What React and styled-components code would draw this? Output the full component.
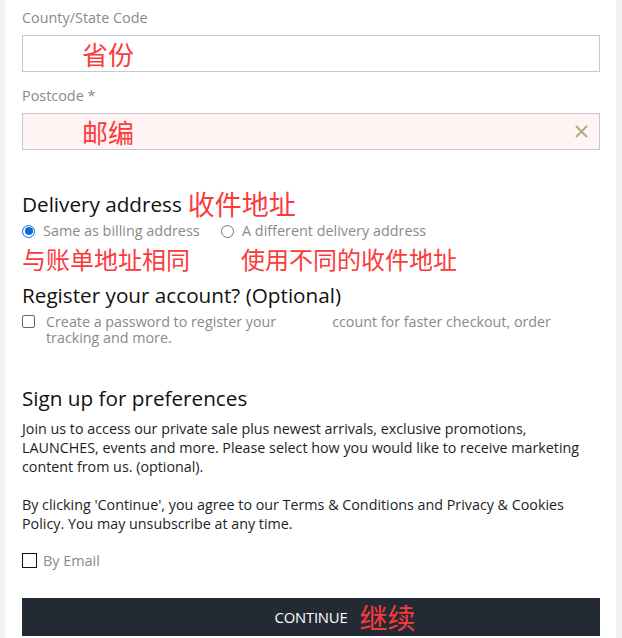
import React from 'react';
import styled, { createGlobalStyle } from 'styled-components';

const Global = createGlobalStyle`
  html, body { margin: 0; padding: 0; background: #f1f2f2; }
  body { font-family: "Open Sans", "Noto Sans CJK SC", sans-serif; }
  #root { width: 622px; }
`;

const Panel = styled.div`
  margin-left: 5px;
  width: 611px;
  height: 638px;
  overflow: hidden;
  background: #fff;
  box-sizing: border-box;
  padding: 9px 16px 0 17px;
  display: flex;
  flex-direction: column;
`;

const Label = styled.div`
  font-size: 14.4px;
  line-height: 18px;
  color: #8a8a8a;
  margin-top: ${p => p.$mt || 0}px;
  margin-bottom: 8px;
`;

const InputBox = styled.div`
  flex: none;
  height: 37px;
  box-sizing: border-box;
  border: 1px solid #c8c8c8;
  background: ${p => (p.$error ? '#fff3f3' : '#fff')};
  display: flex;
  align-items: center;
  padding: 0 11px 0 59px;
`;

const Note = styled.span`
  font-family: "Noto Sans CJK SC", sans-serif;
  color: #fb3a3c;
  font-size: ${p => p.$size || 24}px;
  line-height: 30px;
  padding-left: ${p => p.$pl || 0}px;
  white-space: nowrap;
`;

const Clear = styled.svg`
  margin-left: auto;
  width: 13px;
  height: 13px;
`;

const HeadRow = styled.div`
  flex: none;
  display: flex;
  align-items: center;
  gap: 6px;
  height: 30px;
  margin-top: ${p => p.$mt || 0}px;
`;

const Heading = styled.h3`
  margin: 0;
  font-weight: 400;
  font-size: 20.7px;
  line-height: 26px;
  color: #111;
`;

const OptionGrid = styled.div`
  display: grid;
  grid-template-columns: 199px auto;
  align-items: center;
  margin-top: ${p => p.$mt || 0}px;
`;

const Option = styled.label`
  display: flex;
  align-items: center;
  gap: 8px;
  font-size: 14.4px;
  line-height: 18px;
  color: #8a8a8a;
  white-space: nowrap;
`;

const Radio = styled.span`
  flex: none;
  width: 13px;
  height: 13px;
  box-sizing: border-box;
  border-radius: 50%;
  border: 1px solid ${p => (p.$on ? '#0b6bde' : '#767676')};
  display: flex;
  align-items: center;
  justify-content: center;
  &::after {
    content: '';
    width: 8px;
    height: 8px;
    border-radius: 50%;
    background: ${p => (p.$on ? '#0b6bde' : 'transparent')};
  }
`;

const CheckRow = styled.div`
  display: flex;
  align-items: flex-start;
  gap: 11px;
  margin-top: ${p => p.$mt || 0}px;
`;

const SmallBox = styled.span`
  flex: none;
  width: 13px;
  height: 13px;
  box-sizing: border-box;
  border: 1px solid #666;
  border-radius: 2px;
  margin-top: 1px;
`;

const CheckText = styled.div`
  font-size: 14.3px;
  line-height: 16px;
  color: #8a8a8a;
  white-space: nowrap;
`;

const Gap = styled.span`
  display: inline-block;
  width: ${p => p.$w}px;
`;

const Paragraph = styled.p`
  margin: ${p => p.$mt || 0}px 0 0;
  font-size: 14.3px;
  line-height: 19px;
  color: #1e1e1e;
  white-space: nowrap;
`;

const EmailRow = styled.label`
  flex: none;
  display: flex;
  align-items: center;
  gap: 6px;
  height: 18px;
  margin-top: 19px;
  font-size: 14.4px;
  color: #8a8a8a;
`;

const BigBox = styled.span`
  width: 15px;
  height: 15px;
  box-sizing: border-box;
  border: 1.5px solid #111;
`;

const Button = styled.button`
  flex: none;
  margin-top: 28px;
  height: 38px;
  border: 0;
  background: #232a33;
  display: flex;
  align-items: center;
  justify-content: center;
  padding: 0;
  font-family: inherit;
  color: #fff;
  font-size: 14.8px;
  letter-spacing: -0.2px;
`;

const ButtonLabel = styled.span`
  position: relative;
`;

const ButtonNote = styled(Note)`
  position: absolute;
  left: calc(100% + 12px);
  top: 50%;
  transform: translateY(-50%);
  letter-spacing: 0;
`;

export default function App() {
  return (
    <>
      <Global />
      <Panel>
        <Label>County/State Code</Label>
        <InputBox>
          <Note $size={26}>省份</Note>
        </InputBox>

        <Label $mt={15}>Postcode *</Label>
        <InputBox $error>
          <Note $size={26}>邮编</Note>
          <Clear viewBox="0 0 13 13">
            <path d="M1 1L12 12M12 1L1 12" stroke="#b5aa7e" strokeWidth="2" />
          </Clear>
        </InputBox>

        <HeadRow $mt={39}>
          <Heading>Delivery address</Heading>
          <Note $size={27}>收件地址</Note>
        </HeadRow>

        <OptionGrid $mt={3}>
          <Option>
            <Radio $on />
            Same as billing address
          </Option>
          <Option>
            <Radio />
            A different delivery address
          </Option>
        </OptionGrid>

        <OptionGrid $mt={4}>
          <Note>与账单地址相同</Note>
          <Note $pl={20}>使用不同的收件地址</Note>
        </OptionGrid>

        <HeadRow $mt={6}>
          <Heading>Register your account? (Optional)</Heading>
        </HeadRow>

        <CheckRow $mt={4}>
          <SmallBox />
          <CheckText>
            Create a password to register your<Gap $w={56} />ccount for faster checkout, order
            <br />
            tracking and more.
          </CheckText>
        </CheckRow>

        <HeadRow $mt={37}>
          <Heading>Sign up for preferences</Heading>
        </HeadRow>

        <Paragraph $mt={5.5}>
          Join us to access our private sale plus newest arrivals, exclusive promotions,
          <br />
          LAUNCHES, events and more. Please select how you would like to receive marketing
          <br />
          content from us. (optional).
          <br />
          <br />
          By clicking 'Continue', you agree to our Terms &amp; Conditions and Privacy &amp; Cookies
          <br />
          Policy. You may unsubscribe at any time.
        </Paragraph>

        <EmailRow>
          <BigBox />
          By Email
        </EmailRow>

        <Button>
          <ButtonLabel>
            CONTINUE
            <ButtonNote $size={28}>继续</ButtonNote>
          </ButtonLabel>
        </Button>
      </Panel>
    </>
  );
}
